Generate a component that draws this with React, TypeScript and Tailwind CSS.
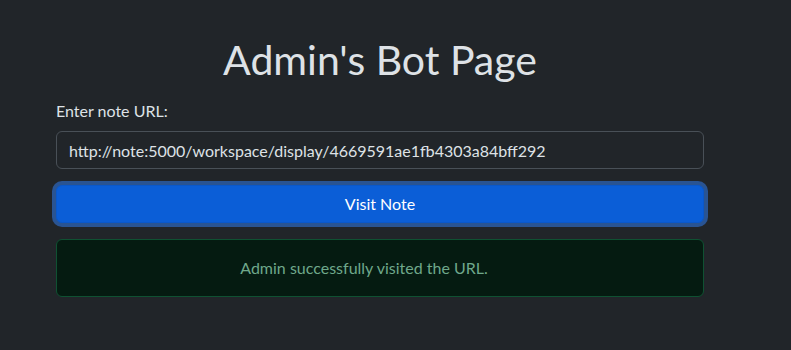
import React, { useState } from 'react';

export default function App() {
  const [url, setUrl] = useState('http://note:5000/workspace/display/4669591ae1fb4303a84bff292');
  const [visited, setVisited] = useState(true);

  return (
    <div
      className="min-h-screen bg-[#212529] text-[#dee2e6]"
      style={{ fontFamily: 'Lato, "Noto Sans", sans-serif' }}
    >
      <div className="ml-[56px] w-[648px] pt-[36px]">
        <h1 className="text-center text-[41px] leading-[48px] mb-[15px]">Admin's Bot Page</h1>

        <form
          onSubmit={(e) => {
            e.preventDefault();
            setVisited(true);
          }}
        >
          <label className="block text-base leading-6 mb-2">Enter note URL:</label>
          <input
            value={url}
            onChange={(e) => setUrl(e.target.value)}
            className="block w-full h-[38px] px-3 text-base bg-[#212529] text-[#dee2e6] border border-[#495057] rounded-md outline-none"
          />
          <button
            type="submit"
            className="block w-full h-[38px] mt-[16px] text-base text-white bg-[#0b5ed7] border border-[#0a58ca] rounded-md shadow-[0_0_0_4px_rgba(49,132,253,0.5)]"
          >
            Visit Note
          </button>
        </form>

        {/* dismissible alert: extra right padding, no close button shown */}
        {visited && (
          <div className="mt-[16px] py-4 pl-4 pr-12 text-center text-base leading-6 bg-[#051b11] border border-[#0f5132] text-[#6fa88b] rounded-md">
            Admin successfully visited the URL.
          </div>
        )}
      </div>
    </div>
  );
}
